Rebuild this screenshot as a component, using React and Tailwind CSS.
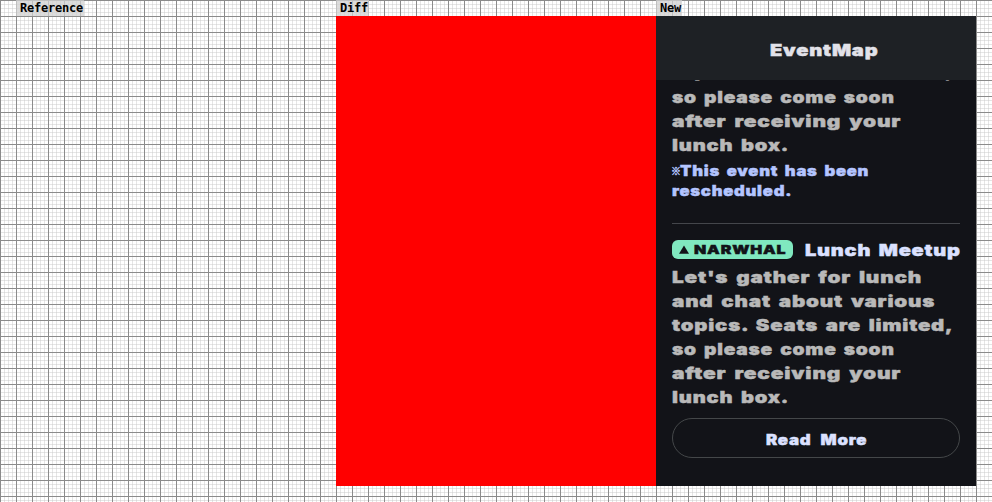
import { useLayoutEffect, useRef } from "react";

// One line of display text, stretched horizontally to a given width.
function Line({ children, width, className = "" }) {
  const box = useRef(null);
  const text = useRef(null);
  useLayoutEffect(() => {
    const natural = text.current.offsetWidth;
    text.current.style.transform = `scaleX(${box.current.offsetWidth / natural})`;
  });
  return (
    <span ref={box} className={`block ${className}`} style={{ width }}>
      <span ref={text} className="inline-block origin-left whitespace-nowrap">
        {children}
      </span>
    </span>
  );
}

const grid =
  "bg-[linear-gradient(#8b8b8b_1px,transparent_1px),linear-gradient(90deg,#8b8b8b_1px,transparent_1px),linear-gradient(#cccccc80_1px,transparent_1px),linear-gradient(90deg,#cccccc80_1px,transparent_1px)] bg-[size:16px_16px,16px_16px,4px_4px,4px_4px]";

function Label({ children, className }) {
  return (
    <div className={`h-4 shrink-0 ${className}`}>
      <span className="inline-block h-4 bg-[#d0d0d0]/75 pr-px pl-1 align-top font-['DejaVu_Sans_Mono',monospace] text-[12px] leading-4 font-bold tracking-[-0.22px] text-black">
        {children}
      </span>
    </div>
  );
}

const body = "text-[16px] leading-6 text-[#b9b9b9]";

export default function App() {
  return (
    <div className={`h-[502px] w-[992px] overflow-hidden bg-white ${grid}`}>
      <div className="flex h-4 pl-4">
        <Label className="w-[320px]">Reference</Label>
        <Label className="w-[320px]">Diff</Label>
        <Label className="w-[320px]">New</Label>
      </div>
      <div className="flex h-[470px] pl-[336px]">
        <div className="w-[320px] bg-[#ff0000]" />
        <div className="flex w-[320px] flex-col overflow-hidden bg-[#121318] font-['Inter',sans-serif] font-black tracking-[0.04em] [word-spacing:0.14em] [-webkit-text-stroke:0.45px_currentColor]">
          <header className="flex h-16 shrink-0 items-center justify-center bg-[#1e2125] pt-[3px] pl-4">
            <Line width={109} className="text-[16px] leading-6 text-[#e2e2e9]">EventMap</Line>
          </header>
          <main className="flex h-[406px] flex-col overflow-hidden px-4">
            <div className={`-mt-[21px] ${body}`}>
              <Line width={281} className="mb-0.5">topics. Seats are limited,</Line>
              <Line width={223}>so please come soon</Line>
              <Line width={229}>after receiving your</Line>
              <Line width={117}>lunch box.</Line>
            </div>
            <div className="mt-1 text-[14px] leading-5 text-[#b4c5ff]">
              <div className="flex">
                <span className="-ml-px w-[9px] shrink-0 font-['Noto_Sans_CJK_JP',sans-serif] text-[10px] font-bold tracking-normal">※</span>
                <Line width={189}>This event has been</Line>
              </div>
              <Line width={120}>rescheduled.</Line>
            </div>
            <div className="mt-[22px] h-px shrink-0 bg-[#44464b]" />
            <div className="mt-4 flex h-[19px] shrink-0 items-center justify-between">
              <div className="flex h-[19px] w-[121px] items-center rounded-md bg-[#80e8bf] pl-[7px] text-[#121318]">
                <svg className="mr-[5px] h-[9px] w-[10px]" viewBox="0 0 10 9">
                  <path d="M5 0.5 10 8.7H0Z" fill="currentColor" />
                </svg>
                <Line width={93} className="text-[12px] leading-5">NARWHAL</Line>
              </div>
              <Line width={156} className="-mr-px text-[16px] leading-6 text-[#dbe1ff]">Lunch Meetup</Line>
            </div>
            <div className={`mt-1.5 ${body}`}>
              <Line width={250}>Let's gather for lunch</Line>
              <Line width={263}>and chat about various</Line>
              <Line width={281}>topics. Seats are limited,</Line>
              <Line width={223}>so please come soon</Line>
              <Line width={229}>after receiving your</Line>
              <Line width={117}>lunch box.</Line>
            </div>
            <button className="mt-[9px] flex h-10 shrink-0 items-center justify-center rounded-full border border-[#444749] pt-[3px] text-[14px] leading-5 text-[#dbe1ff] [word-spacing:0.3em]">
              <Line width={101} className="text-left">Read More</Line>
            </button>
          </main>
        </div>
      </div>
    </div>
  );
}
